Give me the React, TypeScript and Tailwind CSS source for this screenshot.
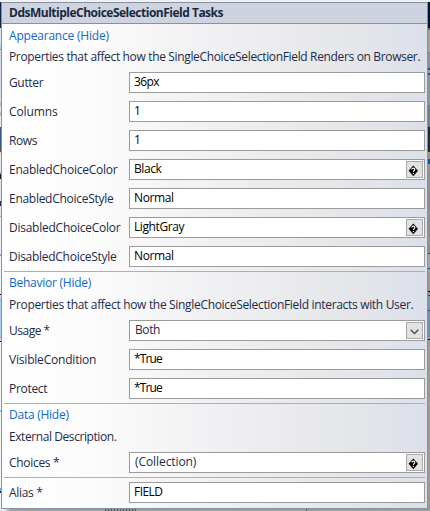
import type { ReactNode } from 'react';

type Band = [height: number, color: string];

const leftBands: Band[] = [
  [26, '#0b2547'], [16, '#dfe3ec'], [5, '#a9d6f5'], [1, '#8b93a5'], [52, '#d7dcea'],
  [4, '#b9bec9'], [6, '#e0e3ea'], [4, '#b9bec9'], [11, '#e8ebf0'], [25, '#3a5688'],
  [2, '#ecd96f'], [18, '#e3e6ee'], [2, '#a8acb4'], [5, '#17183c'], [22, '#e3e3e6'],
  [5, '#252a48'], [10, '#dfe2ea'], [1, '#a8acb4'], [37, '#eef0f4'], [2, '#b98af0'],
  [38, '#f2f4f7'], [1, '#000000'], [2, '#f0e8e4'], [42, '#a4cdee'], [2, '#f2dede'],
  [1, '#000000'], [68, '#f7f8fa'], [2, '#6fcdf2'], [76, '#f7f8fa'], [3, '#6bb0f0'],
  [2, '#1b2b50'], [22, '#f7f8fa'],
];

const rightBands: Band[] = [
  [26, '#04162f'], [2, '#6d7076'], [2, '#a39f9b'], [20, '#a8a4a0'], [1, '#73777f'],
  [15, '#8e929b'], [2, '#2f4d7b'], [3, '#9b9fa7'], [2, '#2f4d7b'], [30, '#8f949f'],
  [22, '#747c8c'], [25, '#222935'], [2, '#aa9a60'], [5, '#96969a'], [5, '#075ba5'],
  [4, '#96969a'], [1, '#a98baa'], [84, '#909094'], [1, '#214784'], [14, '#a3a6ae'],
  [1, '#214784'], [22, '#9c9a98'], [1, '#000000'], [3, '#999999'], [1, '#214784'],
  [14, '#8494ae'], [1, '#214784'], [26, '#7091a7'], [2, '#a49c98'], [1, '#000000'],
  [173, '#9d9b99'],
];

function Strip({ bands, className }: { bands: Band[]; className: string }) {
  return (
    <div className={`h-[511px] shrink-0 overflow-hidden bg-[#f1f1f1] pt-[2px] ${className}`}>
      {bands.map(([height, background], i) => (
        <div key={i} style={{ height, background }} />
      ))}
    </div>
  );
}

function Heading({ children, className }: { children: ReactNode; className: string }) {
  return <div className={`pt-[3px] pl-[7px] leading-4 text-[#1068d0] ${className}`}>{children}</div>;
}

function Note({ children, className }: { children: ReactNode; className: string }) {
  return <div className={`h-[22px] pt-[3px] pl-[7px] leading-4 ${className}`}>{children}</div>;
}

function Divider() {
  return <div className="mr-[2px] ml-[2px] h-px shrink-0 bg-[#a4b1c2]" />;
}

function UnknownGlyph() {
  return (
    <svg width="11" height="12" viewBox="0 0 11 12" className="mt-[2px] mr-[2px] shrink-0">
      <path d="M5.3 .5 10 5.8 5.3 11.2 .6 5.8Z" fill="#000" />
      <path d="M3.8 4.5C3.8 2.6 7 2.7 6.8 4.6 6.7 5.8 5.4 5.6 5.4 7" fill="none" stroke="#fff" strokeWidth="1.1" />
      <path d="M4.8 8h1.2v1.1H4.8Z" fill="#fff" />
    </svg>
  );
}

function Chevron() {
  return (
    <svg width="9" height="6" viewBox="0 0 9 6" className="mt-[2px]">
      <path d="M.7 .8 4.5 4.6 8.3 .8" fill="none" stroke="#4c4c4c" strokeWidth="1.4" />
    </svg>
  );
}

type RowProps = {
  label: string;
  labelClass?: string;
  value: string;
  valueClass?: string;
  button?: 'unknown' | 'chevron';
};

function Row({ label, labelClass = '', value, valueClass = 'pl-[4px] text-black', button }: RowProps) {
  return (
    <div className="flex h-[29px] pt-[4px] pr-[2px] pl-[7px]">
      <div className={`w-[120px] shrink-0 pt-[3px] leading-4 ${labelClass}`}>{label}</div>
      <div className="flex h-[21px] min-w-0 flex-1 items-start justify-between border border-[#9b9b9b] bg-white">
        <span className={`pt-px leading-4 ${valueClass}`}>{value}</span>
        {button && (
          <span className="mt-px mr-px flex h-[17px] w-[17px] items-center justify-center border border-[#a9a9a9] bg-[#e2e2e2]">
            {button === 'unknown' ? <UnknownGlyph /> : <Chevron />}
          </span>
        )}
      </div>
    </div>
  );
}

export default function App() {
  return (
    <div className="flex h-[511px] w-[430px] overflow-hidden bg-[#f1f1f1] font-['Open_Sans','Noto_Sans',sans-serif] text-[12px] whitespace-nowrap text-[#1e2b48]">
      <Strip bands={leftBands} className="w-px" />
      <div className="flex w-[427px] shrink-0 flex-col pt-[2px]">
        <div className="h-[507px] border border-[#8591a5] bg-[linear-gradient(90deg,#ffffff_0%,#fcfcfd_20%,#f1f1f3_48%,#e6e7e9_78%,#e2e4ea_88%,#dce0ea_100%)]">
          <div className="h-[21px] border-b border-[#8591a5] bg-[#cdd4e0] pt-[2px] pl-[7px] font-bold leading-4 tracking-[-0.5px] text-[#1b293e]">
            DdsMultipleChoiceSelectionField Tasks
          </div>
          <Heading className="mt-px h-[21px] tracking-[-0.2px]">Appearance (Hide)</Heading>
          <Note className="tracking-[-0.345px]">
            Properties that affect how the SingleChoiceSelectionField Renders on Browser.
          </Note>
          <Row label="Gutter" labelClass="tracking-[-0.35px]" value="36px" valueClass="pl-[4px] text-black tracking-[-0.6px]" />
          <Row label="Columns" labelClass="tracking-[-0.1px]" value="1" />
          <Row label="Rows" labelClass="tracking-[-0.4px]" value="1" />
          <Row label="EnabledChoiceColor" labelClass="tracking-[-0.24px]" value="Black" valueClass="pl-[4px] text-black tracking-[-0.4px]" button="unknown" />
          <Row label="EnabledChoiceStyle" labelClass="tracking-[-0.28px]" value="Normal" valueClass="pl-[4px] text-black tracking-[-0.4px]" />
          <Row label="DisabledChoiceColor" labelClass="tracking-[-0.25px]" value="LightGray" valueClass="pl-[4px] text-black tracking-[-0.4px]" button="unknown" />
          <Row label="DisabledChoiceStyle" labelClass="tracking-[-0.28px]" value="Normal" valueClass="pl-[4px] text-black tracking-[-0.4px]" />
          <Divider />
          <Heading className="h-[22px] tracking-[-0.25px]">Behavior (Hide)</Heading>
          <Note className="tracking-[-0.32px]">
            Properties that affect how the SingleChoiceSelectionField interacts with User.
          </Note>
          <Row label="Usage *" labelClass="tracking-[-0.5px]" value="Both" valueClass="pl-[5px] tracking-[-0.4px]" button="chevron" />
          <Row label="VisibleCondition" labelClass="tracking-[-0.2px]" value="*True" valueClass="pl-[4px] text-black tracking-[-0.9px]" />
          <Row label="Protect" labelClass="tracking-[-0.3px]" value="*True" valueClass="pl-[4px] text-black tracking-[-0.9px]" />
          <Divider />
          <Heading className="h-[22px] tracking-[-0.25px]">Data (Hide)</Heading>
          <Note className="tracking-[-0.42px]">External Description.</Note>
          <div className="h-[29px]">
            <Row label="Choices *" labelClass="tracking-[-0.3px]" value="(Collection)" valueClass="pl-[5px] tracking-[-0.08px]" button="unknown" />
          </div>
          <Divider />
          <Row label="Alias *" labelClass="tracking-[-0.3px]" value="FIELD" valueClass="pl-[4px] text-black tracking-[-0.55px]" />
        </div>
        <div className="flex h-[2px] bg-[linear-gradient(90deg,#f0f0f0_0px,#e0e0e0_4px,#a0a0a0_10px,#9d9d9d_100%)]">
          <div className="ml-[104px] h-[2px] w-[32px] bg-[repeating-linear-gradient(90deg,#4b4f57_0px,#4b4f57_1px,#969696_1px,#969696_3px)]" />
          <div className="ml-[169px] h-[2px] w-px bg-[#555a60]" />
        </div>
      </div>
      <Strip bands={rightBands} className="w-[2px]" />
    </div>
  );
}
